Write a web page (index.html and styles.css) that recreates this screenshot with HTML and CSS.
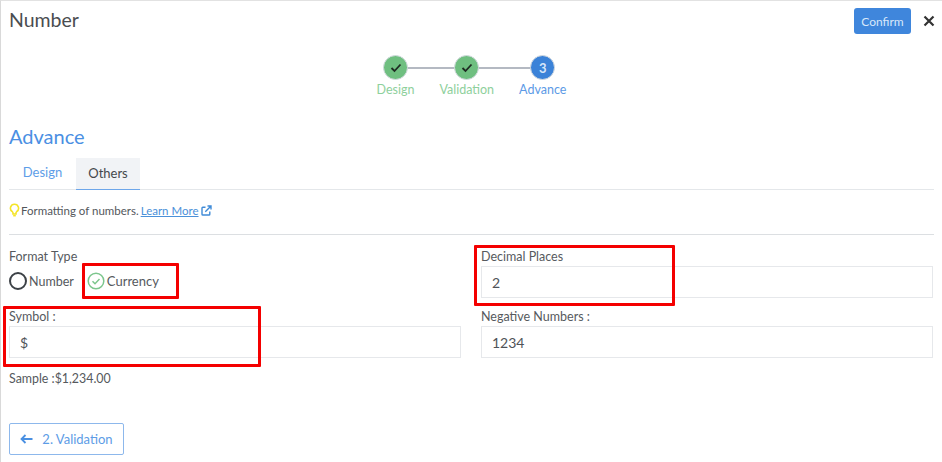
FILE: index.html
```html
<!DOCTYPE html>
<html lang="en">
<head>
<meta charset="utf-8">
<title>Number</title>
<link rel="stylesheet" href="styles.css">
</head>
<body>
<div class="page">
  <header class="top">
    <h1 class="title">Number</h1>
    <div class="top-actions">
      <button class="confirm">Confirm</button>
      <svg class="close" width="12" height="12" viewBox="0 0 12 12"><path d="M1.5 1.5l9 9M10.5 1.5l-9 9" stroke="#333" stroke-width="2.2" fill="none"/></svg>
    </div>
  </header>

  <div class="stepper">
    <div class="step done link-a">
      <span class="dot"><svg width="12" height="10" viewBox="0 0 12 10"><path d="M1.5 5l3 3 6-6.500" stroke="#1f2b22" stroke-width="1.800" fill="none"/></svg></span>
      <span class="step-label">Design</span>
    </div>
    <div class="step done link-b">
      <span class="dot"><svg width="12" height="10" viewBox="0 0 12 10"><path d="M1.5 5l3 3 6-6.500" stroke="#1f2b22" stroke-width="1.800" fill="none"/></svg></span>
      <span class="step-label">Validation</span>
    </div>
    <div class="step current">
      <span class="dot">3</span>
      <span class="step-label">Advance</span>
    </div>
  </div>

  <h2 class="section">Advance</h2>

  <nav class="tabs">
    <span class="tab">Design</span>
    <span class="tab active">Others</span>
  </nav>

  <p class="hint">
    <svg class="bulb" width="11" height="14" viewBox="0 0 11 14"><path d="M5.500 1.200a4 4 0 0 0-2.300 7.300c.5.400.8 1 .8 1.600V11h3v-.9c0-.6.300-1.200.8-1.600a4 4 0 0 0-2.300-7.300z" fill="none" stroke="#f4e427" stroke-width="1.600"/><path d="M4.200 12.700h2.600" stroke="#f4e427" stroke-width="1.500"/></svg>
    <span>Formatting of numbers.</span>
    <a class="more" href="#">Learn More</a>
    <svg class="ext" width="11" height="11" viewBox="0 0 11 11"><path d="M8.800 6.500v2.700a.8.800 0 0 1-.8.800H1.800a.8.800 0 0 1-.8-.8V3a.8.800 0 0 1 .8-.8h2.700" fill="none" stroke="#3f8bd8" stroke-width="1.400"/><path d="M4.300 6.700L9.500 1.500M6.500 1h3.500v3.500" fill="none" stroke="#3f8bd8" stroke-width="1.400"/></svg>
  </p>

  <hr class="rule">

  <div class="form">
    <div class="field">
      <div class="label">Format Type</div>
      <div class="radios">
        <span class="radio"><span class="ring"></span>Number</span>
        <span class="radio checked">
          <svg width="18" height="18" viewBox="0 0 18 18"><circle cx="9" cy="9" r="7.800" fill="none" stroke="#7cc68d" stroke-width="1.500"/><path d="M5.500 9.200l2.500 2.500 4.500-4.700" fill="none" stroke="#7cc68d" stroke-width="1.500"/></svg>
          Currency
        </span>
      </div>
    </div>
    <div class="field">
      <div class="label">Decimal Places</div>
      <div class="input">2</div>
    </div>
    <div class="field">
      <div class="label">Symbol :</div>
      <div class="input">$</div>
    </div>
    <div class="field">
      <div class="label">Negative Numbers :</div>
      <div class="input">1234</div>
    </div>
  </div>

  <p class="sample">Sample :$1,234.00</p>

  <button class="back">
    <svg width="13" height="10" viewBox="0 0 13 10"><path d="M12.500 5H1.500M5.500 1L1.500 5l4 4" fill="none" stroke="#4a90e2" stroke-width="1.800"/></svg>
    2. Validation
  </button>

  <span class="mark mark-currency"></span>
  <span class="mark mark-decimal"></span>
  <span class="mark mark-symbol"></span>
</div>
</body>
</html>
```

FILE: styles.css
```css
* { box-sizing: border-box; }
html, body { margin: 0; height: 100%; background: #fff; }
body { overflow: hidden; font-family: Lato, "Liberation Sans", sans-serif; font-size: 13px; color: #4f5358; }
.page {
  position: relative;
  height: 462px;
  padding: 0 8px 0 8px;
  border-left: 1px solid #d9d9d9;
  border-top: 1px solid #e2e2e2;
}
.top { display: flex; justify-content: space-between; align-items: flex-start; height: 45px; }
.title { margin: 7px 0 0; font-size: 19.500px; line-height: 24px; font-weight: 400; color: #4a4d50; }
.top-actions { display: flex; align-items: center; gap: 12px; margin-top: 7px; margin-right: -1px; }
.confirm {
  width: 57px; height: 26px; padding: 0; border: 0; border-radius: 3px;
  background: #3f86dc; color: #d8e8fa; font: 400 12px Lato, sans-serif;
}
.close { display: block; }

.stepper { display: flex; justify-content: center; gap: 25px; height: 68px; margin-top: 9px; }
.step { position: relative; display: flex; flex-direction: column; align-items: center; }
.dot {
  position: relative; z-index: 1;
  display: flex; align-items: center; justify-content: center;
  width: 25px; height: 25px; border-radius: 50%;
  border: 1px solid #d5dbe0;
  font-size: 13px; font-weight: 700; color: #d6e6f8;
}
.done .dot { background: #6fbf80; }
.current .dot { background: #3b82d8; }
.step-label { margin-top: 2px; font-size: 12.500px; line-height: 16px; }
.done .step-label { color: #8ed09c; }
.current .step-label { color: #5c9ae6; }
.step.done::after {
  content: ""; position: absolute; top: 12px; left: 50%; height: 2px; background: #b4b9c2;
}
.link-a::after { width: 71px; }
.link-b::after { width: 76px; }

.section { margin: 0; font-size: 20px; line-height: 26px; font-weight: 400; color: #4a8fe3; }

.tabs { display: flex; height: 32px; margin-top: 9px; border-bottom: 1px solid #e4e7ea; }
.tab { display: flex; align-items: center; justify-content: center; width: 67px; height: 32px; color: #5d9de8; padding-bottom: 4px; }
.tab.active { width: 64px; background: #f1f3f6; color: #44484c; padding-bottom: 2px; border-bottom: 1px solid #6da6ea; }

.hint { display: flex; align-items: center; height: 20px; margin: 10px 0 0; font-size: 11.500px; color: #53575b; }
.bulb { margin-right: 1px; }
.more { margin-left: 2px; color: #4a90d9; text-decoration: underline; }
.ext { margin-left: 2px; }

.rule { height: 1px; margin: 14px 0 0; border: 0; background: #dcdfe2; }

.form { display: grid; grid-template-columns: 452px 452px; column-gap: 20px; row-gap: 11px; margin-top: 14px; }
.label { font-size: 12.500px; line-height: 16px; color: #565a5e; }
.input { display: flex; align-items: center; height: 32px; margin-top: 1px; padding-left: 10px; border: 1px solid #e6e8eb; color: #4f5358; font-size: 14px; }
.radios { display: flex; align-items: center; gap: 13px; height: 32px; font-size: 12.500px; }
.radio { display: flex; align-items: center; gap: 2px; color: #55595d; }
.ring { width: 18px; height: 18px; border: 2px solid #3c4146; border-radius: 50%; }
.checked { font-size: 13px; }

.sample { margin: 13px 0 0; font-size: 12.400px; line-height: 16px; color: #55595d; }

.back {
  display: flex; align-items: center; justify-content: center; gap: 9px;
  width: 115px; height: 32px; margin-top: 36px; padding: 0;
  border: 1px solid #8db8ec; border-radius: 2px; background: #fff;
  color: #5d9ce6; font: 400 13px Lato, sans-serif;
}

.mark { position: absolute; border: 3px solid #f40000; border-radius: 1px; pointer-events: none; }
.mark-currency { left: 81px; top: 262px; width: 97px; height: 36px; }
.mark-decimal { left: 473px; top: 244px; width: 201px; height: 61px; }
.mark-symbol { left: 2px; top: 305px; width: 258px; height: 61px; }
```
